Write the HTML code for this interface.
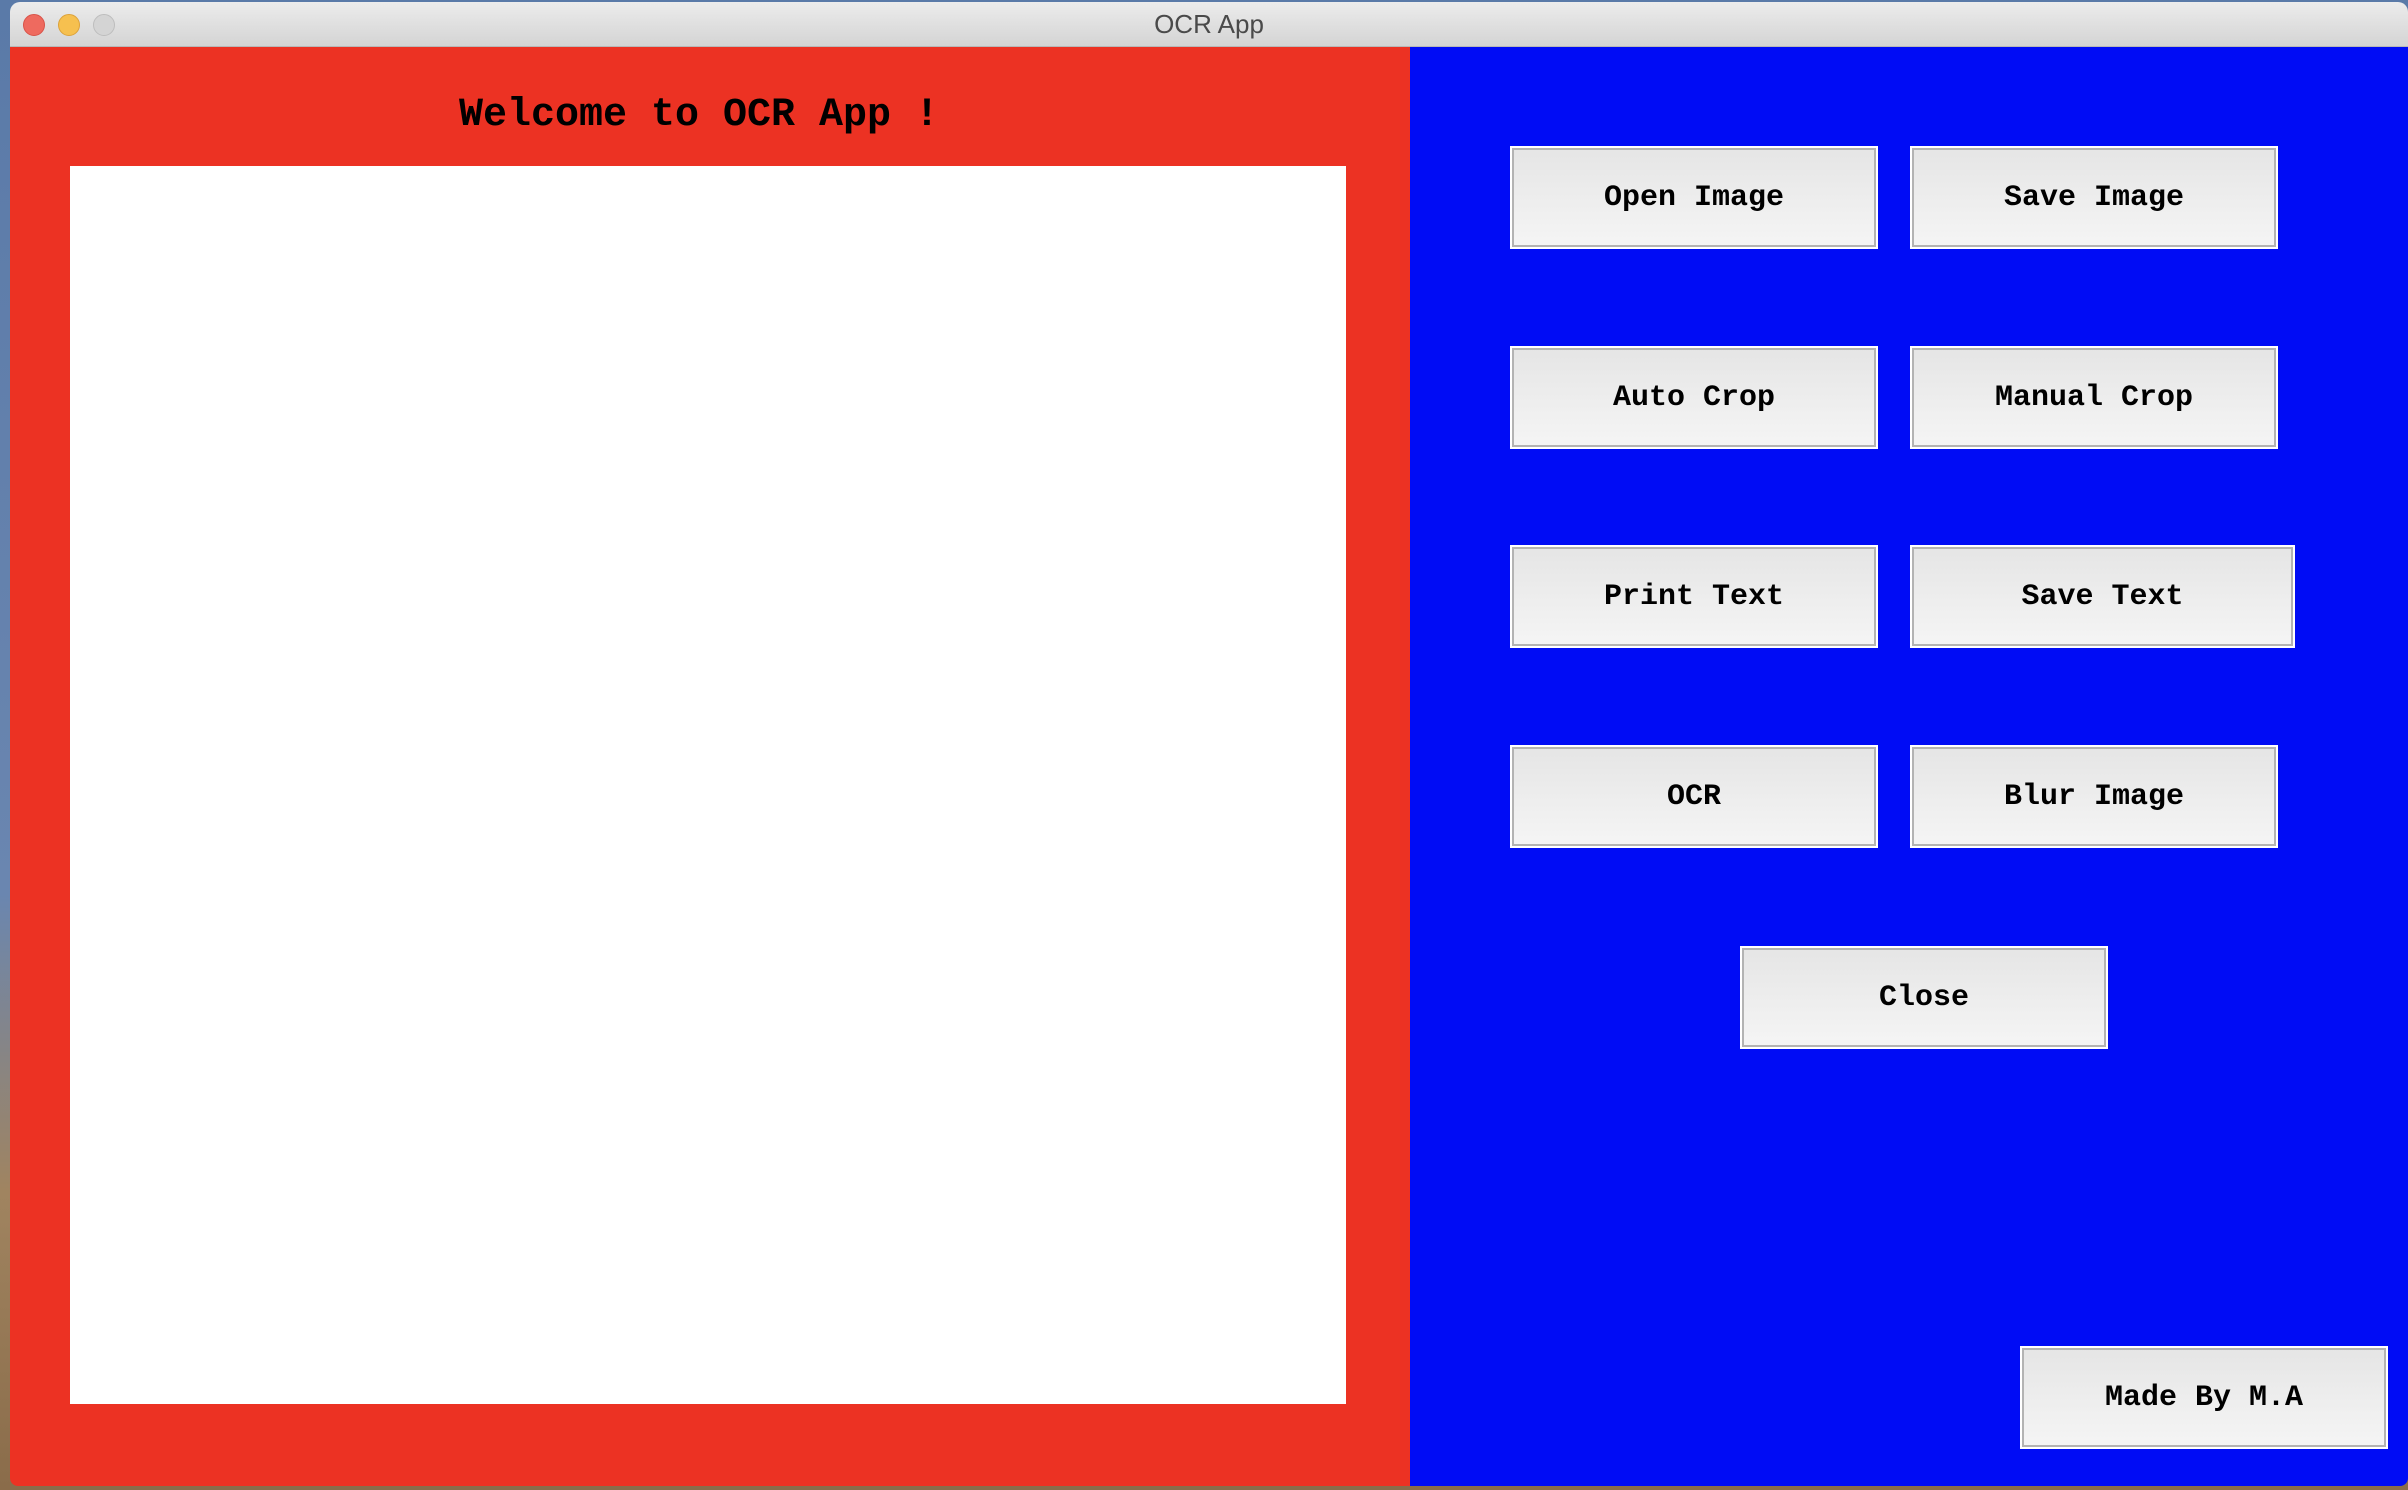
<!DOCTYPE html>
<html><head><style>
html,body{margin:0;padding:0;width:2408px;height:1490px;overflow:hidden;background:linear-gradient(#5a7aa8 0,#6a86b0 60%,#a08460 80%,#8a6c4a 100%);position:relative;font-family:"Liberation Mono",monospace}
.win{position:absolute;left:10px;top:2px;width:2398px;height:1484px;border-radius:10px 10px 8px 8px;overflow:hidden}
.tb{position:absolute;left:0;top:0;right:0;height:44px;background:linear-gradient(#ececec,#d4d4d4);border-bottom:1px solid #b8b8b8;font-family:"Liberation Sans",sans-serif;font-size:26px;color:#4a4a4a;text-align:center;line-height:44px}
.dot{position:absolute;top:12px;width:20px;height:20px;border-radius:50%}
.red{position:absolute;left:0;top:45px;width:1400px;bottom:0;background:#ec3223}
.blue{position:absolute;left:1400px;top:45px;right:0;bottom:0;background:#000cf5}
.h{position:absolute;left:-11px;width:1400px;top:46px;line-height:46px;text-align:center;font-weight:bold;font-size:40px;color:#000}
.img{position:absolute;left:60px;top:119px;width:1276px;height:1238px;background:#fff}
.b{position:absolute;box-sizing:border-box;border:2px solid #fff;box-shadow:inset 0 0 0 2px #b3b3b3;background:linear-gradient(#e5e5e5,#f5f5f5);display:flex;align-items:center;justify-content:center;font-weight:bold;font-size:30px;color:#000;height:103px;width:368px}
</style></head><body>
<div class="win">
<div class="tb">OCR App
<div class="dot" style="left:13px;background:#ee6a5f;border:1px solid #d85248"></div>
<div class="dot" style="left:48px;background:#f6c04f;border:1px solid #dca23a"></div>
<div class="dot" style="left:83px;background:#d4d4d4;border:1px solid #bdbdbd"></div>
</div>
<div class="red"><div class="h">Welcome to OCR App !</div><div class="img"></div></div>
<div class="blue"></div>
</div>
<div class="b" style="left:1510px;top:146px">Open Image</div>
<div class="b" style="left:1910px;top:146px">Save Image</div>
<div class="b" style="left:1510px;top:346px">Auto Crop</div>
<div class="b" style="left:1910px;top:346px">Manual Crop</div>
<div class="b" style="left:1510px;top:545px">Print Text</div>
<div class="b" style="left:1910px;top:545px;width:385px">Save Text</div>
<div class="b" style="left:1510px;top:745px">OCR</div>
<div class="b" style="left:1910px;top:745px">Blur Image</div>
<div class="b" style="left:1740px;top:946px">Close</div>
<div class="b" style="left:2020px;top:1346px">Made By M.A</div>
</body></html>
